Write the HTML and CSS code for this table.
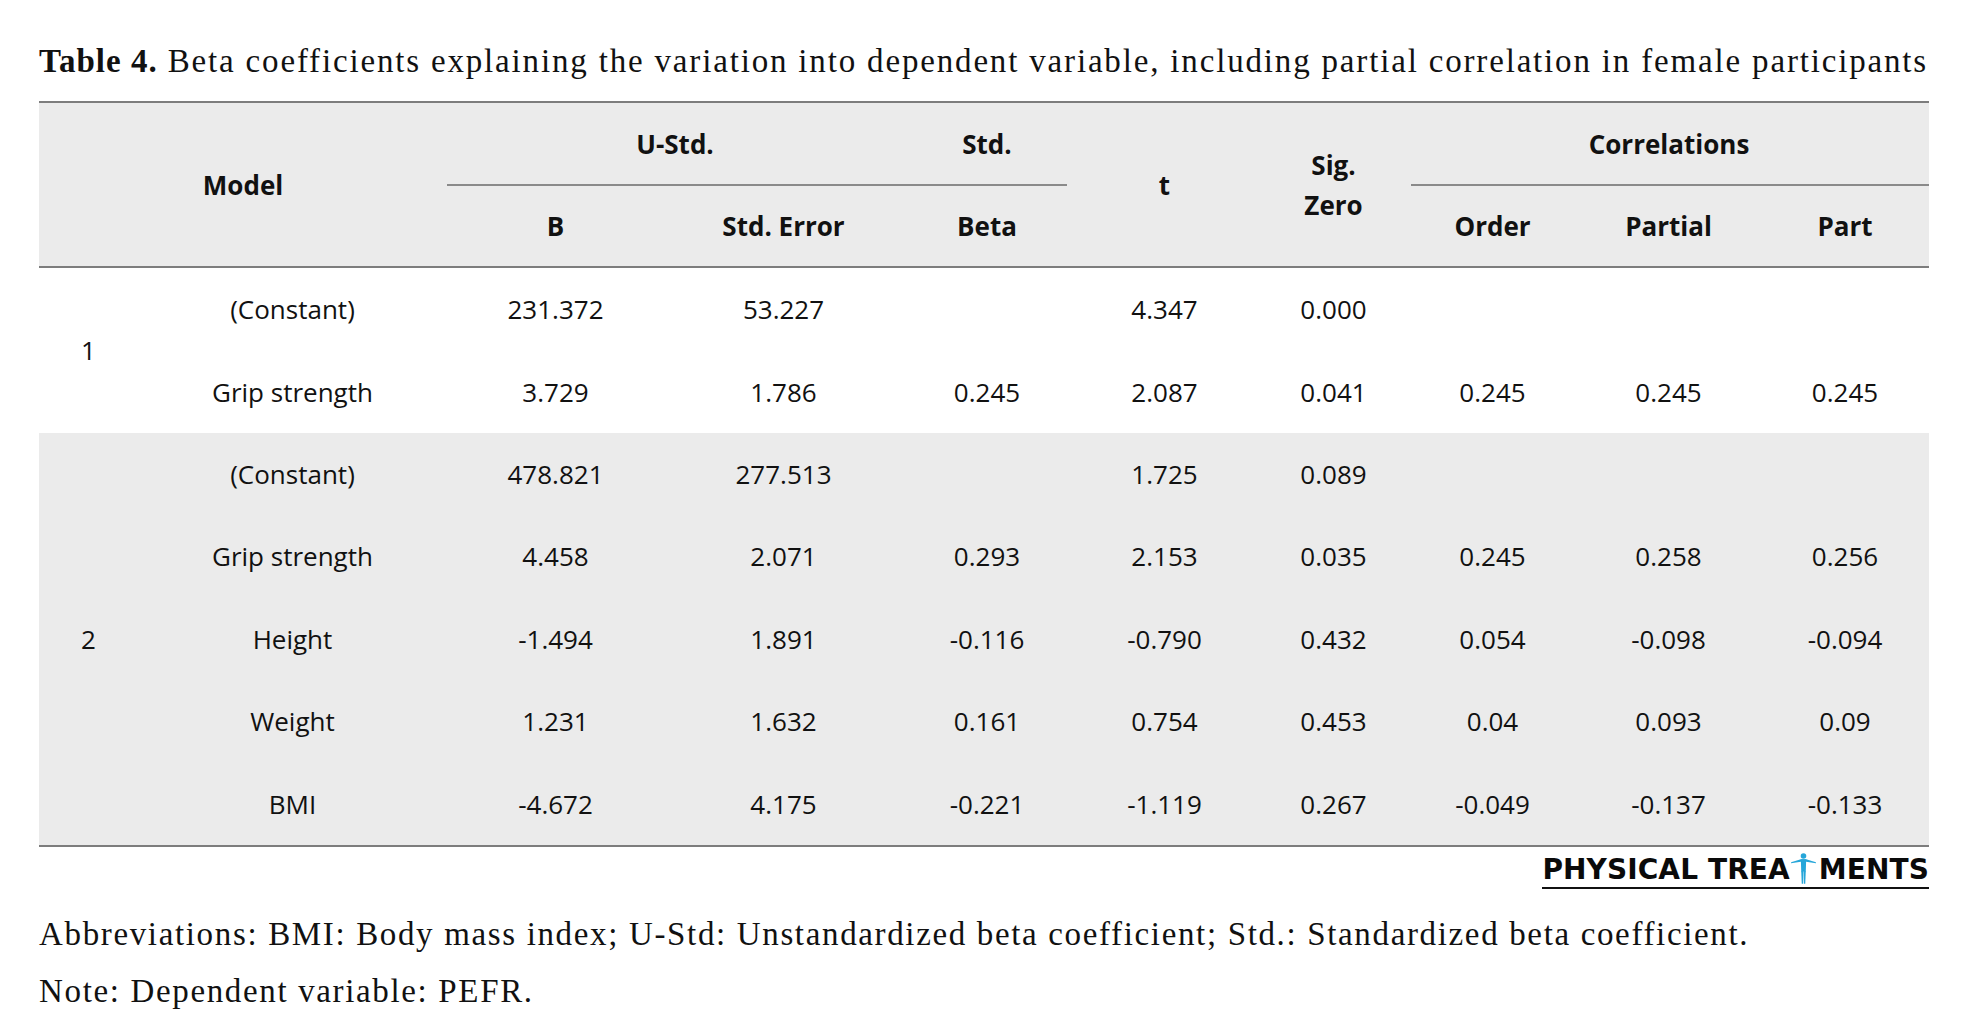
FILE: index.html
```html
<!DOCTYPE html>
<html lang="en">
<head>
<meta charset="utf-8">
<title>Table 4</title>
<link rel="stylesheet" href="styles.css">
</head>
<body>
<div class="page">
  <p class="caption"><b>Table 4.</b> Beta coefficients explaining the variation into dependent variable, including partial correlation in female participants</p>
  <table class="data">
    <colgroup>
      <col class="c-num"><col class="c-label"><col class="c-b"><col class="c-se"><col class="c-beta"><col class="c-t"><col class="c-sig"><col class="c-order"><col class="c-partial"><col class="c-part">
    </colgroup>
    <thead>
      <tr class="h1">
        <th colspan="2" rowspan="2">Model</th>
        <th colspan="2" class="grp"><span>U-Std.</span></th>
        <th class="grp grp-end"><span>Std.</span></th>
        <th rowspan="2">t</th>
        <th rowspan="2" class="sig">Sig.<br>Zero</th>
        <th colspan="3" class="grp grp-start"><span>Correlations</span></th>
      </tr>
      <tr class="h2">
        <th>B</th><th>Std. Error</th><th>Beta</th><th>Order</th><th>Partial</th><th>Part</th>
      </tr>
    </thead>
    <tbody class="m1">
      <tr><td rowspan="2" class="num">1</td><td>(Constant)</td><td>231.372</td><td>53.227</td><td></td><td>4.347</td><td>0.000</td><td></td><td></td><td></td></tr>
      <tr><td>Grip strength</td><td>3.729</td><td>1.786</td><td>0.245</td><td>2.087</td><td>0.041</td><td>0.245</td><td>0.245</td><td>0.245</td></tr>
    </tbody>
    <tbody class="m2">
      <tr><td rowspan="5" class="num">2</td><td>(Constant)</td><td>478.821</td><td>277.513</td><td></td><td>1.725</td><td>0.089</td><td></td><td></td><td></td></tr>
      <tr><td>Grip strength</td><td>4.458</td><td>2.071</td><td>0.293</td><td>2.153</td><td>0.035</td><td>0.245</td><td>0.258</td><td>0.256</td></tr>
      <tr><td>Height</td><td>-1.494</td><td>1.891</td><td>-0.116</td><td>-0.790</td><td>0.432</td><td>0.054</td><td>-0.098</td><td>-0.094</td></tr>
      <tr><td>Weight</td><td>1.231</td><td>1.632</td><td>0.161</td><td>0.754</td><td>0.453</td><td>0.04</td><td>0.093</td><td>0.09</td></tr>
      <tr class="last"><td>BMI</td><td>-4.672</td><td>4.175</td><td>-0.221</td><td>-1.119</td><td>0.267</td><td>-0.049</td><td>-0.137</td><td>-0.133</td></tr>
    </tbody>
  </table>
  <div class="logo-row">
    <div class="logo">
      <span>PHYSICAL TREA</span><svg class="figure" viewBox="0 0 24 30" width="25" height="31" aria-hidden="true"><circle cx="12" cy="2.9" r="2.7"/><polygon points="0,8.9 9.4,6.1 14.6,6.1 24,8.9 24,9.9 14.6,8.4 9.4,8.4 0,9.9"/><path d="M9.4 6.1 H14.6 L14.2 18 H9.8 Z"/><path d="M9.8 17.3 H11.9 L11.6 29.8 H10.3 Z"/><path d="M12.1 17.3 H14.2 L13.7 29.8 H12.4 Z"/></svg><span>MENTS</span>
    </div>
  </div>
  <p class="note first">Abbreviations: BMI: Body mass index; U-Std: Unstandardized beta coefficient; Std.: Standardized beta coefficient.</p>
  <p class="note">Note: Dependent variable: PEFR.</p>
</div>
</body>
</html>
```
FILE: styles.css
```css
html, body {
  margin: 0;
  padding: 0;
  background: #ffffff;
}
.page {
  padding: 41px 49px 0 39px;
  color: #111;
}
.caption {
  margin: 0;
  font-family: "Liberation Serif", serif;
  font-size: 33px;
  line-height: 40px;
  white-space: nowrap;
  letter-spacing: 1.83px;
}
.caption b {
  font-weight: bold;
  letter-spacing: 1px;
}
.data {
  margin-top: 20px;
  width: 1890px;
  border-collapse: collapse;
  table-layout: fixed;
  font-family: "Open Sans", sans-serif;
  font-size: 26px;
  color: #111;
}
.c-num { width: 99px; }
.c-label { width: 309px; }
.c-b { width: 217px; }
.c-se { width: 239px; }
.c-beta { width: 168px; }
.c-t { width: 187px; }
.c-sig { width: 151px; }
.c-order { width: 167px; }
.c-partial { width: 185px; }
.c-part { width: 168px; }
thead {
  background: #ebebeb;
  border-top: 2px solid #7d7d7d;
  border-bottom: 2px solid #7d7d7d;
}
th {
  font-weight: bold;
  text-align: center;
  vertical-align: middle;
  padding: 0;
  line-height: 40px;
}
.h1 th { height: 82px; }
.h2 th { height: 81px; }
.grp {
  position: relative;
}
.grp::after {
  content: "";
  position: absolute;
  left: 0;
  right: 0;
  bottom: -1px;
  height: 2px;
  background: #8a8a8a;
}
.grp-end::after { right: 4px; }
.grp-start::after { left: 2px; }
td {
  text-align: center;
  vertical-align: middle;
  padding: 0;
  height: 82.4px;
  line-height: 36px;
}
.m2 {
  background: #ebebeb;
  border-bottom: 2px solid #7d7d7d;
}
.logo-row {
  display: flex;
  justify-content: flex-end;
  width: 1890px;
  margin-top: 6px;
}
.logo {
  display: flex;
  align-items: flex-end;
  font-family: "DejaVu Sans", sans-serif;
  font-weight: bold;
  font-size: 28px;
  line-height: 28px;
  letter-spacing: 0.1px;
  color: #0a0a0a;
  padding-bottom: 3px;
  border-bottom: 2px solid #111;
}
.figure {
  fill: #26a6d9;
  margin: 0 3px 0 1px;
  position: relative;
  top: 0;
}
.note {
  margin: 0;
  font-family: "Liberation Serif", serif;
  font-size: 33px;
  line-height: 57px;
  white-space: nowrap;
  letter-spacing: 1.65px;
}
.note.first {
  margin-top: 17px;
}
```
